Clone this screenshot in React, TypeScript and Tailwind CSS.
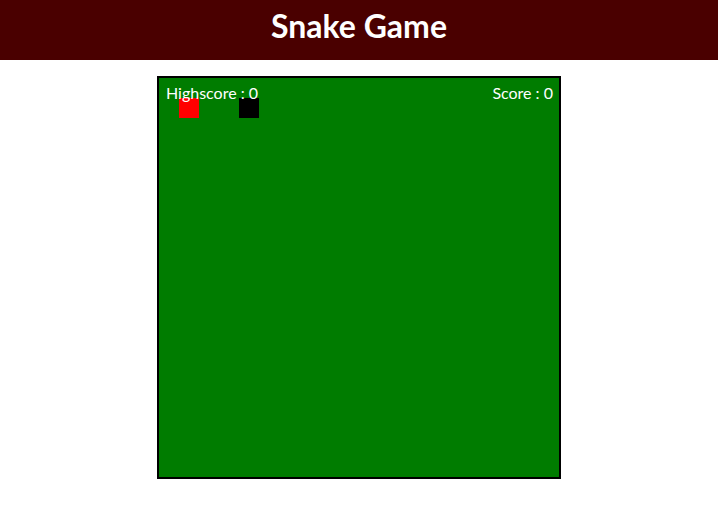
const CELL = 20;

const food = { x: 1, y: 1 };
const snake = [{ x: 4, y: 1 }];

export default function App() {
  return (
    <div className="min-h-screen bg-white font-['Lato',sans-serif]">
      <header className="h-[60px] bg-[#4a0000] flex items-center justify-center pb-[9px]">
        <h1 className="text-white text-[32px] font-bold leading-none">Snake Game</h1>
      </header>
      <div className="flex justify-center pt-4">
        <div className="relative w-[404px] h-[403px] border-2 border-black bg-[#007c00]">
          <div className="absolute top-[5px] left-[7px] right-[6px] flex justify-between text-white text-[16px] leading-5 z-10">
            <span>Highscore : 0</span>
            <span>Score : 0</span>
          </div>
          <div
            className="absolute w-5 h-5 bg-[#ff0000]"
            style={{ left: food.x * CELL, top: food.y * CELL }}
          />
          {snake.map((s, i) => (
            <div
              key={i}
              className="absolute w-5 h-5 bg-black"
              style={{ left: s.x * CELL, top: s.y * CELL }}
            />
          ))}
        </div>
      </div>
    </div>
  );
}
